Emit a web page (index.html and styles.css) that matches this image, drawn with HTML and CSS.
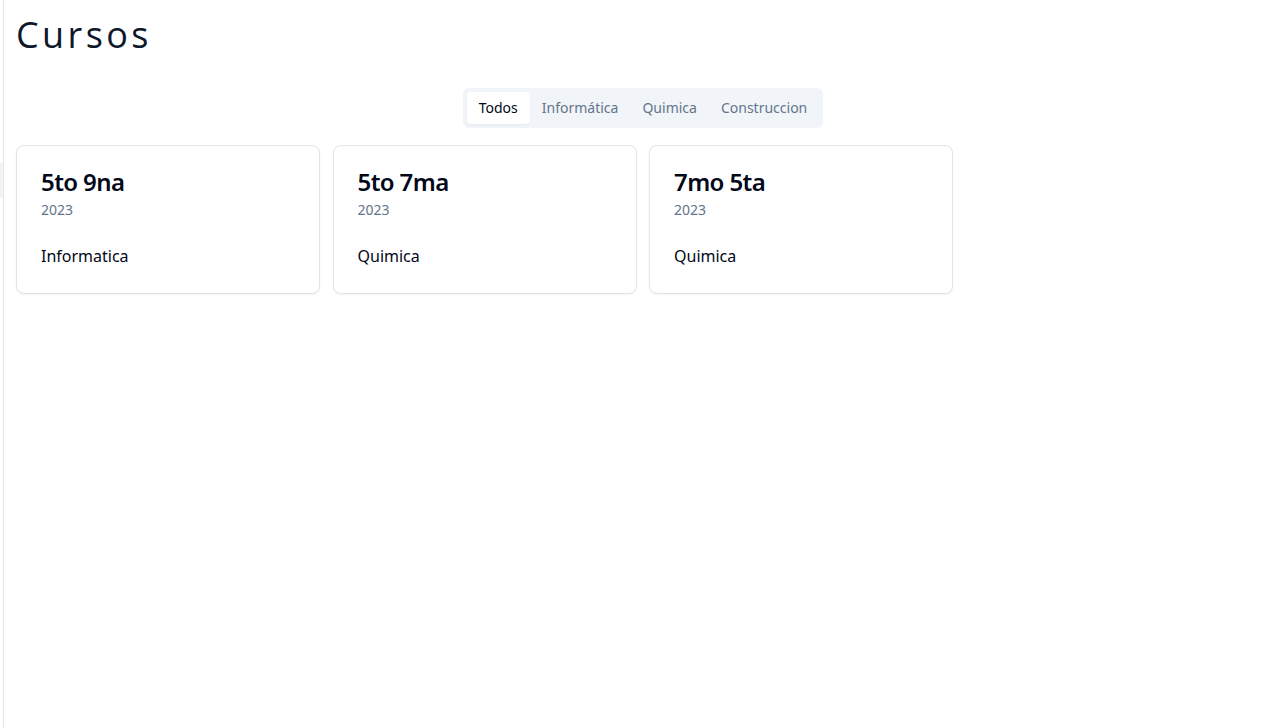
FILE: index.html
```html
<!DOCTYPE html>
<html lang="es">
<head>
<meta charset="utf-8">
<title>Cursos</title>
<link rel="stylesheet" href="styles.css">
</head>
<body>
<div class="layout">
  <aside class="rail"><div class="rail-item"></div></aside>
  <main class="main">
    <h1 class="page-title">Cursos</h1>
    <div class="tabs-wrap">
      <div class="tabs">
        <button class="tab active">Todos</button>
        <button class="tab">Informática</button>
        <button class="tab">Quimica</button>
        <button class="tab">Construccion</button>
      </div>
    </div>
    <div class="grid">
      <div class="card">
        <div class="card-header">
          <h3 class="card-title">5to 9na</h3>
          <p class="card-desc">2023</p>
        </div>
        <div class="card-content">Informatica</div>
      </div>
      <div class="card">
        <div class="card-header">
          <h3 class="card-title">5to 7ma</h3>
          <p class="card-desc">2023</p>
        </div>
        <div class="card-content">Quimica</div>
      </div>
      <div class="card">
        <div class="card-header">
          <h3 class="card-title">7mo 5ta</h3>
          <p class="card-desc">2023</p>
        </div>
        <div class="card-content">Quimica</div>
      </div>
    </div>
  </main>
</div>
</body>
</html>
```

FILE: styles.css
```css
* { box-sizing: border-box; }
html, body { margin: 0; padding: 0; background: #fff; }
body {
  font-family: "Noto Sans", "Open Sans", sans-serif;
  color: #020817;
  height: 728px;
  overflow: hidden;
}
.layout { display: flex; height: 728px; }
.rail {
  width: 4px;
  flex: 0 0 4px;
  border-right: 1px solid #e6e6ea;
}
.rail-item {
  margin-top: 163px;
  height: 35px;
  width: 3px;
  background: #f2f3f5;
}
.main {
  flex: 1;
  padding: 15px 10px 0 12px;
}
.page-title {
  margin: 0;
  font-family: "Open Sans", sans-serif;
  font-weight: 400;
  font-size: 36px;
  line-height: 40px;
  letter-spacing: 3.4px;
  color: #0f172a;
}
.tabs-wrap {
  display: flex;
  justify-content: center;
  margin-top: 33px;
}
.tabs {
  display: inline-flex;
  align-items: center;
  height: 40px;
  padding: 4px;
  background: #f1f5f9;
  border-radius: 6px;
}
.tab {
  font-family: inherit;
  font-size: 14px;
  font-weight: 400;
  line-height: 20px;
  padding: 6px 12px;
  border: 0;
  background: transparent;
  color: #64748b;
  border-radius: 4px;
}
.tab.active {
  background: #fff;
  color: #020817;
  box-shadow: 0 1px 2px rgba(0,0,0,0.05);
}
.grid {
  margin-top: 17px;
  display: grid;
  grid-template-columns: repeat(4, 304px);
  column-gap: 12.5px;
}
.card {
  border: 1px solid #e4e4e7;
  border-radius: 8px;
  background: #fff;
  box-shadow: 0 1px 2px rgba(0,0,0,0.05);
}
.card-header {
  padding: 24px;
  display: flex;
  flex-direction: column;
  gap: 6px;
}
.card-title {
  margin: 0;
  font-size: 24px;
  font-weight: 600;
  line-height: 24px;
  letter-spacing: -0.6px;
  color: #020817;
}
.card-desc {
  margin: 0;
  font-size: 14px;
  line-height: 20px;
  color: #64748b;
}
.card-content {
  padding: 0 24px 25px;
  font-size: 16px;
  line-height: 24px;
  color: #020817;
}
```
